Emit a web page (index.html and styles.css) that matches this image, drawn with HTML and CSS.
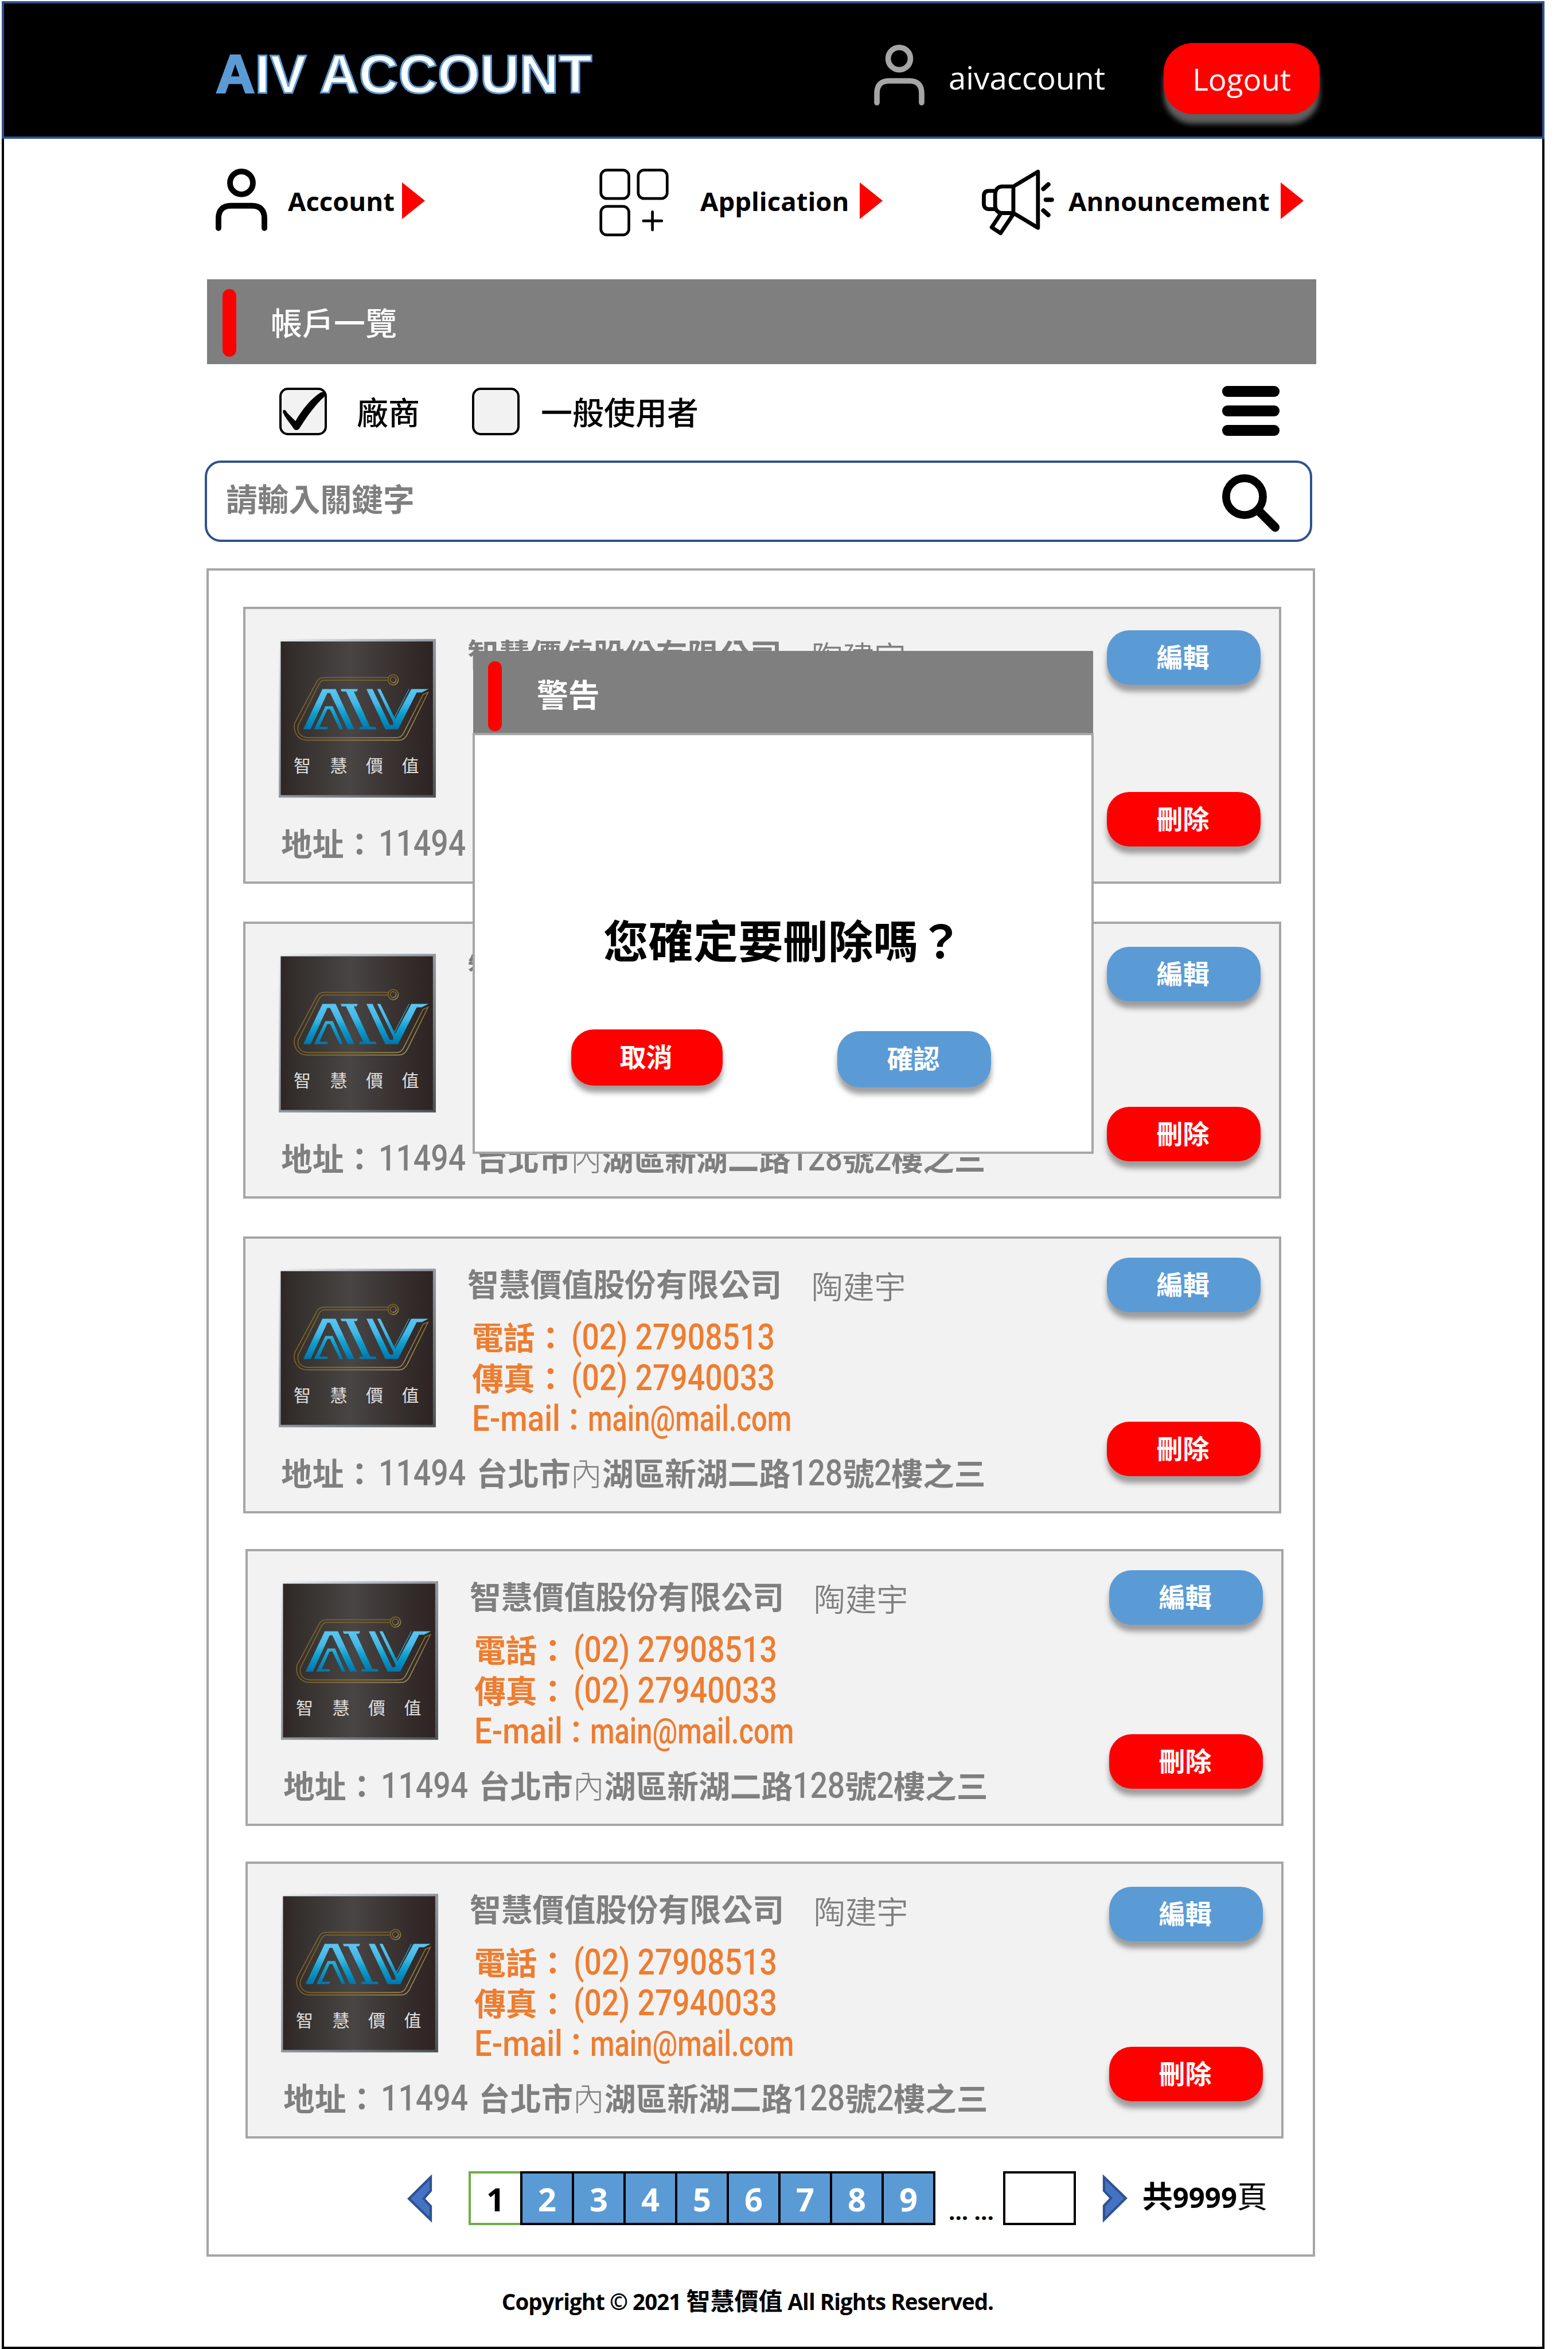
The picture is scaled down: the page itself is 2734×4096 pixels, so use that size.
FILE: index.html
```html
<!DOCTYPE html>
<html lang="zh-Hant">
<head>
<meta charset="utf-8">
<title>AIV Account</title>
<link rel="stylesheet" href="styles.css">
</head>
<body>
<svg class="defs" aria-hidden="true">
  <defs>
    <linearGradient id="plate" x1="0" x2="1" y1="0" y2="0">
      <stop offset="0" stop-color="#2f2524"/><stop offset=".08" stop-color="#332e2b"/><stop offset=".46" stop-color="#484544"/><stop offset=".85" stop-color="#332b2a"/><stop offset="1" stop-color="#2f2423"/>
    </linearGradient>
    <linearGradient id="rim" x1="0" x2="1" y1="0" y2="1">
      <stop offset="0" stop-color="#eef1f4"/><stop offset=".45" stop-color="#9aa0a8"/><stop offset="1" stop-color="#4c5355"/>
    </linearGradient>
    <linearGradient id="blue" gradientUnits="userSpaceOnUse" x1="0" x2="0" y1="102" y2="184">
      <stop offset="0" stop-color="#5bc5f2"/><stop offset=".35" stop-color="#45b8e6"/><stop offset=".6" stop-color="#0f9fce"/><stop offset="1" stop-color="#0076ab"/>
    </linearGradient>
    <linearGradient id="gold" x1="0" x2="1" y1="0" y2="1">
      <stop offset="0" stop-color="#7a6430"/><stop offset=".5" stop-color="#7d6128"/><stop offset="1" stop-color="#a89a62"/>
    </linearGradient>
    <symbol id="logo" viewBox="0 0 320 323">
      <rect width="320" height="323" fill="url(#rim)"/>
      <rect x="4" y="5" width="310" height="313" fill="url(#plate)"/>
      <g fill="none" stroke="url(#gold)" stroke-width="2">
        <path d="M223 78.500H93C84 78.500 79 82 76 90L33 170C28 187 38 206 57 206H245C254 206 259 200 262 194L304 109L294 113L254 192C250 199 246 201 238 201H60C45 201 36 190 40 175L83 90C86 86 88 84 93 84H223"/>
        <circle cx="233" cy="83" r="10.500"/><circle cx="233" cy="83" r="6"/>
      </g>
      <g fill="url(#blue)">
        <path d="M50 184L89 102H116L154 184H140.500L104.500 110H99L65 184Z"/>
        <path d="M72 184L95 137H110L131 184H124L104.500 143H99L83 179H100L99 184Z"/>
        <path d="M126 102H161L159 107H153L186 179H197L199 184H163L165 179H172L137 107H128Z"/>
        <path d="M178.600 102H191L226 175H233V169L200.500 102H207L237 163L270 102H305L291 109H281L243 184H217Z"/>
      </g>
      <path d="M265.500 102L235.500 160" stroke="#2f9fd0" stroke-width="1.500"/>
      <text class="logo-text" x="48 122 195 268" y="271" text-anchor="middle">智慧價值</text>
    </symbol>
    <symbol id="user" viewBox="0 0 105 127">
      <g fill="none" stroke="currentColor" stroke-width="11.500" stroke-linecap="round">
        <circle cx="52.500" cy="29" r="23.300"/>
        <path d="M5.800 121V101C5.800 84 15 75.500 31 75.500H74C90 75.500 99.200 84 99.200 101V121"/>
      </g>
    </symbol>
  </defs>
</svg>

<header class="header">
  <h1 class="brand"><span class="brand-first">A</span>IV ACCOUNT</h1>
  <svg class="header-user"><use href="#user"/></svg>
  <span class="username">aivaccount</span>
  <button class="logout">Logout</button>
</header>

<div class="page">
  <nav class="nav">
    <a class="nav-item"><svg class="nav-user"><use href="#user"/></svg><span class="nav-label nav-label-account">Account</span><i class="arrow"></i></a>
    <a class="nav-item">
      <svg class="nav-apps" viewBox="0 0 141 139" fill="none" stroke="#000" stroke-width="5.500">
        <rect x="3" y="3" width="57" height="58" rx="12"/><rect x="79" y="3" width="59" height="58" rx="12"/><rect x="3" y="77" width="57" height="58" rx="12"/>
        <path d="M108 88V125M89.500 106.500H127" stroke-linecap="round"/>
      </svg>
      <span class="nav-label nav-label-app">Application</span><i class="arrow"></i></a>
    <a class="nav-item">
      <svg class="nav-horn" viewBox="0 0 148 135" fill="none" stroke="#000" stroke-width="8" stroke-linejoin="round" stroke-linecap="round">
        <path d="M64 35L114 5V119L64 89ZM64 35H42C32 35 27 42 27 52V73C27 84 33 89 42 89H64M27 44H14C7 44 4 48 4 55V70C4 77 8 81 14 81H27M38 91L20 118L38 130L62 94"/>
        <path d="M135 31L125 40M130 62H142M125 84L135 93" stroke-width="9"/>
      </svg>
      <span class="nav-label nav-label-news">Announcement</span><i class="arrow"></i></a>
  </nav>

  <main class="main">
    <div class="panel-title"><i class="mark"></i><h2>帳戶一覽</h2></div>

    <div class="filters">
      <span class="check"><svg viewBox="0 0 97 97"><path d="M7 49C8 43 13 45 16 51L33 68C47 44 65 22 84 10C92 7 95 12 92 18C74 34 56 59 41 83C36 89 31 87 27 80C18 67 11 60 7 49Z"/></svg></span>
      <span class="check-label">廠商</span>
      <span class="check check-second"></span>
      <span class="check-label">一般使用者</span>
      <span class="burger"><i></i><i></i><i></i></span>
    </div>

    <div class="search">
      <span class="placeholder">請輸入關鍵字</span>
      <svg class="search-icon" viewBox="0 0 118 118"><circle cx="45.500" cy="45.500" r="37.500" fill="none" stroke="#000" stroke-width="16"/><path d="M75 75L108 108" stroke="#000" stroke-width="18" stroke-linecap="round"/></svg>
    </div>

    <section class="list">
      <article class="card card-1">
        <svg class="logo"><use href="#logo"/></svg>
        <div class="info">
          <div class="name"><b>智慧價值股份有限公司</b><span>陶建宇</span></div>
          <div class="contact"><p>電話：<span class="num phone">(02) 27908513</span></p><p>傳真：<span class="num phone">(02) 27940033</span></p><p><span class="num mail-label">E-mail</span><span class="colon">：</span><span class="num mail">main@mail.com</span></p></div>
        </div>
        <div class="address">地址：<span class="num zip">11494 </span>台北市<span class="thin">內</span>湖區新湖二路<span class="num digits-3">128</span>號<span class="num digits-1">2</span>樓之三</div>
        <div class="actions"><button class="btn btn-edit">編輯</button><button class="btn btn-delete">刪除</button></div>
      </article>
      <article class="card card-2">
        <svg class="logo"><use href="#logo"/></svg>
        <div class="info">
          <div class="name"><b>智慧價值股份有限公司</b><span>陶建宇</span></div>
          <div class="contact"><p>電話：<span class="num phone">(02) 27908513</span></p><p>傳真：<span class="num phone">(02) 27940033</span></p><p><span class="num mail-label">E-mail</span><span class="colon">：</span><span class="num mail">main@mail.com</span></p></div>
        </div>
        <div class="address">地址：<span class="num zip">11494 </span>台北市<span class="thin">內</span>湖區新湖二路<span class="num digits-3">128</span>號<span class="num digits-1">2</span>樓之三</div>
        <div class="actions"><button class="btn btn-edit">編輯</button><button class="btn btn-delete">刪除</button></div>
      </article>
      <article class="card card-3">
        <svg class="logo"><use href="#logo"/></svg>
        <div class="info">
          <div class="name"><b>智慧價值股份有限公司</b><span>陶建宇</span></div>
          <div class="contact"><p>電話：<span class="num phone">(02) 27908513</span></p><p>傳真：<span class="num phone">(02) 27940033</span></p><p><span class="num mail-label">E-mail</span><span class="colon">：</span><span class="num mail">main@mail.com</span></p></div>
        </div>
        <div class="address">地址：<span class="num zip">11494 </span>台北市<span class="thin">內</span>湖區新湖二路<span class="num digits-3">128</span>號<span class="num digits-1">2</span>樓之三</div>
        <div class="actions"><button class="btn btn-edit">編輯</button><button class="btn btn-delete">刪除</button></div>
      </article>
      <article class="card card-4">
        <svg class="logo"><use href="#logo"/></svg>
        <div class="info">
          <div class="name"><b>智慧價值股份有限公司</b><span>陶建宇</span></div>
          <div class="contact"><p>電話：<span class="num phone">(02) 27908513</span></p><p>傳真：<span class="num phone">(02) 27940033</span></p><p><span class="num mail-label">E-mail</span><span class="colon">：</span><span class="num mail">main@mail.com</span></p></div>
        </div>
        <div class="address">地址：<span class="num zip">11494 </span>台北市<span class="thin">內</span>湖區新湖二路<span class="num digits-3">128</span>號<span class="num digits-1">2</span>樓之三</div>
        <div class="actions"><button class="btn btn-edit">編輯</button><button class="btn btn-delete">刪除</button></div>
      </article>
      <article class="card card-5">
        <svg class="logo"><use href="#logo"/></svg>
        <div class="info">
          <div class="name"><b>智慧價值股份有限公司</b><span>陶建宇</span></div>
          <div class="contact"><p>電話：<span class="num phone">(02) 27908513</span></p><p>傳真：<span class="num phone">(02) 27940033</span></p><p><span class="num mail-label">E-mail</span><span class="colon">：</span><span class="num mail">main@mail.com</span></p></div>
        </div>
        <div class="address">地址：<span class="num zip">11494 </span>台北市<span class="thin">內</span>湖區新湖二路<span class="num digits-3">128</span>號<span class="num digits-1">2</span>樓之三</div>
        <div class="actions"><button class="btn btn-edit">編輯</button><button class="btn btn-delete">刪除</button></div>
      </article>

      <div class="pager">
        <svg class="chevron" viewBox="0 0 52 102"><path d="M48.500 7V35L34 51.500L48.500 67V95L3.500 51.500Z"/></svg>
        <div class="pages"><span class="current">1</span><span>2</span><span>3</span><span>4</span><span>5</span><span>6</span><span>7</span><span>8</span><span>9</span></div>
        <span class="dots">... ...</span>
        <span class="page-input"></span>
        <svg class="chevron" viewBox="0 0 52 102"><path d="M3.500 7V35L18 50.500L3.500 66V95L48.500 50.500Z"/></svg>
        <span class="total"><b>共<span class="total-num">9999</span></b>頁</span>
      </div>
    </section>
  </main>

  <footer class="footer">Copyright © 2021 <span class="footer-name">智慧價值</span> All Rights Reserved.</footer>
</div>

<div class="modal">
  <div class="modal-head"><i class="mark"></i><h3>警告</h3></div>
  <div class="modal-body">
    <p class="question">您確定要刪除嗎？</p>
    <div class="modal-actions"><button class="btn btn-cancel">取消</button><button class="btn btn-ok">確認</button></div>
  </div>
</div>
</body>
</html>
```
FILE: styles.css
```css
* { box-sizing: border-box; }

body {
  margin: 0;
  width: 2734px;
  height: 4096px;
  padding: 2px 0 0 3px;
  overflow: hidden;
  background: #fff;
  color: #000;
  font-family: "Open Sans", "Noto Sans CJK TC", sans-serif;
  position: relative;
}

h1, h2, h3, p { margin: 0; }
button { border: 0; padding: 0; color: #fff; font-family: inherit; }
svg { display: block; flex: none; }
.defs { position: absolute; width: 0; height: 0; }

/* Header */
.header {
  width: 2690px;
  height: 240px;
  padding: 18px 0 0 369px;
  display: flex;
  align-items: center;
  background: #000;
  border: 4px solid #2f528f;
}
.brand {
  width: 1148px;
  margin-bottom: 4px;
  font: bold 95px/100px "Liberation Sans", Arial, sans-serif;
  color: #fff;
  -webkit-text-stroke: 3px #5b9bd5;
  white-space: nowrap;
}
.brand-first { color: #5b9bd5; }
.header-user { width: 88px; height: 106px; color: #a6a6a6; }
.username { width: 375px; margin: 8px 0 0 42px; font-size: 54.6px; line-height: 70px; color: #fff; }
.logout {
  width: 272px;
  height: 124px;
  margin-top: 12px;
  border-radius: 51px;
  background: #f00;
  font-size: 53px;
  box-shadow: 0 17px 10px rgba(127, 127, 127, .745);
}

/* Page frame */
.page {
  width: 2690px;
  height: 3854px;
  padding-left: 354px;
  border: 4px solid #000;
  border-top: 0;
  background: #fff;
}

/* Navigation */
.nav {
  height: 216px;
  padding-left: 15px;
  display: grid;
  grid-template-columns: 669px 667px auto;
  align-items: center;
}
.nav-item { display: flex; align-items: center; }
.nav-user { width: 90px; height: 109px; margin-top: -4px; }
.nav-apps { width: 121px; height: 119px; margin-top: 6px; }
.nav-horn { width: 127px; height: 116px; margin-top: 6px; }
.nav-label { font-size: 45.5px; font-weight: 700; line-height: 60px; white-space: nowrap; }
.nav-label-account { width: 199px; margin-left: 36px; }
.nav-label-app { width: 278px; margin-left: 55px; }
.nav-label-news { width: 370px; margin-left: 24px; }
.arrow {
  width: 40px;
  height: 64px;
  background: #f00;
  clip-path: polygon(0 0, 100% 50%, 0 100%);
}

/* Title bar */
.main { padding-top: 29px; }
.panel-title {
  width: 1934px;
  height: 148px;
  padding-left: 27px;
  display: flex;
  align-items: center;
  background: #7f7f7f;
  color: #fff;
}
.mark { width: 24px; height: 118px; margin-top: 3px; border-radius: 12px; background: #f00; flex: none; }
.panel-title h2 { margin: -2px 0 0 60px; font: 500 55px/80px "Noto Sans CJK TC", sans-serif; }

/* Filters */
.filters { height: 165px; margin-bottom: 3px; padding-left: 126px; display: flex; align-items: center; }
.check { width: 83px; height: 83px; border: 4px solid #000; border-radius: 15px; background: #f2f2f2; }
.check svg { width: 83px; height: 83px; margin: -4px; }
.check-second { margin-left: 91px; }
.check-label { margin: -3px 0 0 52px; font: 500 55px/80px "Noto Sans CJK TC", sans-serif; }
.check-second + .check-label { margin-left: 37px; }
.burger { width: 100px; margin: -2px 458px 0 auto; display: grid; gap: 15px; }
.burger i { height: 19px; border-radius: 9px; background: #000; }

/* Search */
.search {
  width: 1931px;
  height: 142px;
  margin-left: -4px;
  padding: 0 52px 0 33px;
  display: flex;
  align-items: center;
  justify-content: space-between;
  border: 4px solid #2f528f;
  border-radius: 28px;
}
.placeholder { margin-top: -14px; font: 700 54.8px/80px "Noto Sans CJK TC", sans-serif; color: #7f7f7f; }
.search-icon { width: 101px; height: 101px; margin-top: 6px; }

/* Account list */
.list {
  width: 1933px;
  height: 2944px;
  margin: 46px 0 0 -1px;
  padding: 63px 0 0 60px;
  border: 4px solid #a6a6a6;
}
.card {
  width: 1810px;
  height: 483px;
  display: grid;
  grid-template-columns: 387px 1115px 268px;
  grid-template-rows: 374px auto;
  border: 4px solid #a6a6a6;
  background: #f2f2f2;
  font-family: "Noto Sans CJK TC", sans-serif;
  font-size: 54.8px;
}
.card-2, .card-3 { margin-top: 66px; }
.card-4, .card-5 { margin: 62px 0 0 4px; }
.logo { width: 274px; height: 277px; margin: 52px 0 0 58px; }
.logo-text { font-family: "Noto Sans CJK TC", sans-serif; font-size: 35px; fill: #e0e0e0; }
.name { height: 80px; margin-top: 36px; display: flex; line-height: 80px; color: #7f7f7f; }
.name span { margin: 4px 0 0 52px; font-weight: 350; }
.contact { margin: 18px 0 0 8px; color: #ed7d31; font-weight: 700; }
.contact p { height: 71px; line-height: 71px; white-space: nowrap; }
.address { grid-column: 1 / 3; margin: -8px 0 0 62px; height: 80px; line-height: 80px; font-weight: 700; color: #7f7f7f; white-space: nowrap; }
.thin { font-weight: 300; }

/* Condensed latin runs inside the CJK lines */
.num {
  display: inline-block;
  font-family: Roboto, sans-serif;
  font-size: 63px;
  font-weight: 500;
  line-height: 0;
  white-space: pre;
  transform: scaleX(.85);
  transform-origin: 0 50%;
}
.phone { margin-left: 9px; }
.mail-label { width: 152px; transform: scaleX(.865); }
.colon { display: inline-block; width: 50px; text-indent: -2px; font-weight: 500; }
.mail { transform: scaleX(.775); }
.zip { width: 170px; margin-left: 6px; }
.digits-3 { width: 91px; }
.digits-1 { width: 30px; }

.actions { grid-column: 3; grid-row: 1 / 3; }
.btn {
  display: block;
  width: 268px;
  height: 95px;
  padding: 0 3px 8px 0;
  border-radius: 39px;
  font: 700 46px/80px "Noto Sans CJK TC", sans-serif;
  box-shadow: 0 12px 10px rgba(127, 127, 127, .745);
}
.btn-edit, .btn-ok { background: #5b9bd5; }
.btn-delete, .btn-cancel { background: #f00; }
.btn-edit { margin-top: 37px; }
.btn-delete { margin-top: 187px; }
.card-2 .btn-edit, .card-5 .btn-edit { margin-top: 40px; }
.card-2 .btn-delete, .card-5 .btn-delete { margin-top: 184px; }
.card-3 .btn-edit, .card-4 .btn-edit { margin-top: 33px; }
.card-3 .btn-delete, .card-4 .btn-delete { margin-top: 191px; }

/* Pager */
.pager { margin: 57px 0 0 286px; height: 94px; display: flex; align-items: center; }
.chevron { width: 44px; height: 87px; }
.chevron path { fill: #4472c4; stroke: #2f528f; stroke-width: 5; }
.pages { margin-left: 63px; display: flex; }
.pages span {
  width: 94px;
  height: 94px;
  margin-right: -4px;
  border: 4px solid #000;
  background: #5b9bd5;
  color: #fff;
  font-size: 56px;
  font-weight: 700;
  line-height: 88px;
  text-align: center;
}
.pages .current { border-color: #70ad47; background: #fff; color: #000; }
.dots { margin: 46px 0 0 27px; font-size: 40px; font-weight: 700; line-height: 50px; white-space: nowrap; }
.page-input { width: 127px; height: 94px; margin-left: 16px; border: 4px solid #000; }
.page-input + .chevron { margin-left: 46px; }
.total { margin: -8px 0 0 26px; font-family: "Noto Sans CJK TC", sans-serif; font-size: 53px; line-height: 80px; white-space: nowrap; }
.total-num { font-family: "Open Sans", sans-serif; font-size: 49px; }

/* Footer */
.footer { width: 1885px; margin-top: 47px; text-align: center; font-size: 38.5px; font-weight: 700; line-height: 60px; letter-spacing: -.95px; }
.footer-name { font-size: 42px; letter-spacing: 0; }

/* Confirmation dialog */
.modal { position: absolute; left: 824px; top: 1135px; width: 1083px; }
.modal-head {
  width: 1081px;
  height: 143px;
  margin-left: 1px;
  padding-left: 26px;
  display: flex;
  align-items: center;
  background: #7f7f7f;
  color: #fff;
}
.modal-head .mark { height: 122px; margin-top: 15px; }
.modal-head h3 { margin: 3px 0 0 61px; font: 700 54.8px/80px "Noto Sans CJK TC", sans-serif; }
.modal-body { height: 734px; border: 4px solid #a6a6a6; background: #fff; }
.question { margin: 295px 0 0 224px; font: 700 78.4px/120px "Noto Sans CJK TC", sans-serif; white-space: nowrap; }
.modal-actions { margin: 98px 0 0 168px; display: flex; gap: 200px; }
.modal .btn { height: 98px; margin-top: 0; }
.modal .btn-cancel { width: 264px; }
.modal .btn-ok { margin-top: 3px; }
```
